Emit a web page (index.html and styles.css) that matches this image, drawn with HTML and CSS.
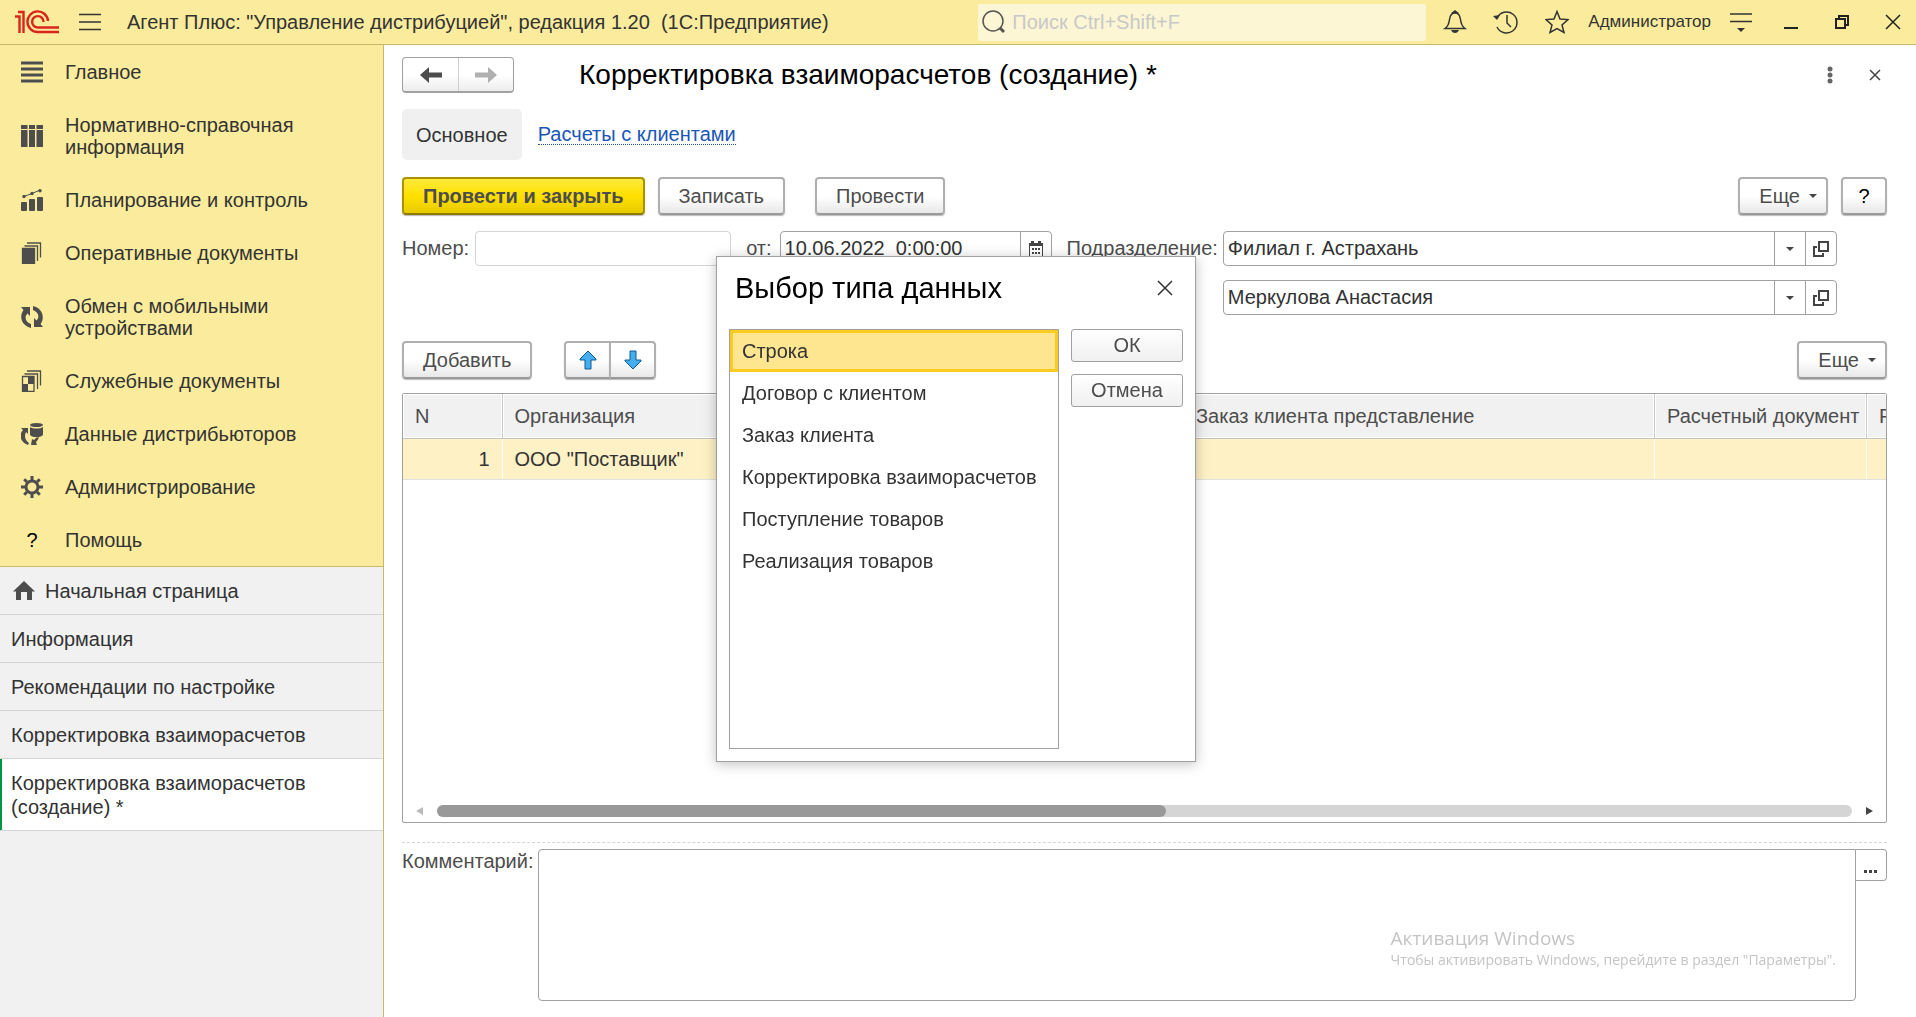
FILE: index.html
```html
<!DOCTYPE html>
<html lang="ru">
<head>
    <meta charset="UTF-8">
    <meta name="viewport" content="width=device-width, initial-scale=1.0">
    <title>Корректировка взаиморасчетов (создание) *</title>
    <link rel="stylesheet" href="styles.css">
</head>
<body>

<!-- Top bar -->
<header class="topbar">
    <svg class="logo" width="44" height="24" viewBox="0 0 44 24" fill="none" stroke="#d9261c" stroke-width="2.400">
        <path d="M0 6.500h4.500V23M3 2h5.500V23"/>
        <path d="M33 11A10.300 10.300 0 1 0 22.800 22H44"/>
        <path d="M28.500 12A5.700 5.700 0 1 0 22.800 17.500H44"/>
    </svg>
    <button class="icon-btn burger" aria-label="Меню">
        <svg width="22" height="18" viewBox="0 0 22 18" stroke="#333" stroke-width="1.500"><path d="M0 1.500h22M0 9h22M0 16.500h22"/></svg>
    </button>
    <span class="app-title">Агент Плюс: "Управление дистрибуцией", редакция 1.20&nbsp; (1С:Предприятие)</span>

    <label class="search">
        <svg width="24" height="24" viewBox="0 0 24 24" fill="none" stroke="#555"><circle cx="11" cy="11" r="10" stroke-width="1.500"/><path d="M18 18l4 4" stroke-width="3"/></svg>
        <input type="text" placeholder="Поиск Ctrl+Shift+F" aria-label="Поиск">
    </label>

    <nav class="top-tools">
        <button class="icon-btn" aria-label="Уведомления">
            <svg width="24" height="24" viewBox="0 0 24 24" fill="none" stroke="#333" stroke-width="1.500"><path d="M2 18.500c3-2 4-5 4.500-9C7 5.500 8.500 3 12 3s5 2.500 5.500 6.500c.5 4 1.500 7 4.500 9z"/><path d="M10 2.500h4L12 1z" fill="#333"/><path d="M8 20h8c-1 2-2 3-4 3s-3-1-4-3z" fill="#333" stroke="none"/></svg>
        </button>
        <button class="icon-btn" aria-label="История">
            <svg width="26" height="26" viewBox="0 0 26 26" fill="none" stroke="#333" stroke-width="1.500"><path d="M4 9A10.500 10.500 0 1 1 4 18"/><path d="M14 6v8l4 4"/><path d="M0 7l7-1-3 5z" fill="#333" stroke="none"/></svg>
        </button>
        <button class="icon-btn" aria-label="Избранное">
            <svg width="24" height="24" viewBox="0 0 24 24" fill="none" stroke="#333" stroke-width="1.500"><path d="M12 1.500l3 7.500 8 .6-6 5.400 2 7.500-7-4-7 4 2-7.500-6-5.400 8-.6z"/></svg>
        </button>
        <span class="user">Администратор</span>
        <button class="icon-btn" aria-label="Настройки">
            <svg width="22" height="22" viewBox="0 0 22 22" stroke="#333" stroke-width="1.500"><path d="M0 3h22M0 10.500h22"/><path d="M7 17h8l-4 4z" fill="#333" stroke="none"/></svg>
        </button>
    </nav>
    <div class="window-tools">
        <button class="icon-btn" aria-label="Свернуть">
            <svg width="16" height="16" viewBox="0 0 16 16"><path d="M1 13h14v2H1z" fill="#222"/></svg>
        </button>
        <button class="icon-btn" aria-label="Восстановить">
            <svg width="16" height="16" viewBox="0 0 16 16" fill="none" stroke="#222" stroke-width="2"><path d="M2 5h9v9H2zM5 5V2h9v9h-3"/></svg>
        </button>
        <button class="icon-btn" aria-label="Закрыть">
            <svg width="16" height="16" viewBox="0 0 16 16" stroke="#222" stroke-width="1.500"><path d="M1 1l14 14M15 1L1 15"/></svg>
        </button>
    </div>
</header>

<div class="layout">

    <!-- Left panel -->
    <aside class="sidebar">
        <nav class="sections">
            <a href="#">
                <svg viewBox="0 0 22 22" stroke="#4d4d4d" stroke-width="3"><path d="M0 2h22M0 8h22M0 14h22M0 20h22"/></svg>
                Главное
            </a>
            <a href="#">
                <svg viewBox="0 0 22 22" fill="#4d4d4d"><path d="M0 0h6.500v4H0zM8 0h6v4H8zM15.500 0H22v4h-6.500zM0 5h6.500v17H0zM8 5h6v17H8zM15.500 5H22v17h-6.500z"/></svg>
                Нормативно-справочная информация
            </a>
            <a href="#">
                <svg viewBox="0 0 22 22" fill="#4d4d4d"><rect y="13" width="6" height="9" rx="1"/><rect x="8" y="10" width="6" height="12" rx="1"/><rect x="16" y="8" width="6" height="14" rx="1"/><path d="M3 7.500l8-3L19 1" fill="none" stroke="#4d4d4d"/><circle cx="3" cy="7.500" r="1.700"/><circle cx="11" cy="4.500" r="1.700"/><circle cx="19" cy="1.700" r="1.700"/></svg>
                Планирование и контроль
            </a>
            <a href="#">
                <svg viewBox="0 0 22 22" fill="none" stroke="#4d4d4d" stroke-width="1.300"><path d="M1.500 6.500h12v15h-12z" fill="#4d4d4d"/><path d="M3.500 4h13v15M6 1h13.500v14.500"/></svg>
                Оперативные документы
            </a>
            <a href="#">
                <svg viewBox="0 0 22 22" fill="#4d4d4d"><path d="M0 1h9v9L6.500 7.500C3 11 4.500 16 10 18v4C1 20 -2.500 11 2.500 4z"/><path d="M22 21h-9v-9l2.500 2.500C19 11 17.500 6 12 4V0c9 2 12.500 11 7.500 18z"/></svg>
                Обмен с мобильными устройствами
            </a>
            <a href="#">
                <svg viewBox="0 0 22 22" fill="none" stroke="#4d4d4d" stroke-width="1.300"><path d="M1.500 6.500h11.500v15H1.500z"/><path d="M7 7h6v7H7zM2 14h5v7H2z" fill="#4d4d4d" stroke="none"/><path d="M3.500 4h13v15M6 1h13.500v14.500"/></svg>
                Служебные документы
            </a>
            <a href="#">
                <svg viewBox="0 0 22 22" fill="#4d4d4d"><ellipse cx="15.500" cy="2" rx="6.500" ry="2"/><path d="M9 4c3 2 10 2 13 0v8c-3 3-10 3-13 0z"/><path d="M0 5h7v6L5 9c-2 4-1 8 3 11l-1 2C-2 18-2 11 2 7zM18 14c-1 3-2 4-3 5l1 3h-6l1-6 2 1 2-2z"/></svg>
                Данные дистрибьюторов
            </a>
            <a href="#">
                <svg viewBox="0 0 22 22" fill="none" stroke="#4d4d4d" stroke-width="3"><circle cx="11" cy="11" r="6"/><path d="M11 0v4M11 18v4M0 11h4M18 11h4M3.200 3.200L6 6M16 16l2.800 2.800M18.800 3.200L16 6M6 16l-2.800 2.800"/></svg>
                Администрирование
            </a>
            <a href="#">
                <span class="question">?</span>
                Помощь
            </a>
        </nav>
        <nav class="open-windows">
            <a href="#">
                <svg width="22" height="20" viewBox="0 0 22 20" fill="#4d4d4d"><path d="M11 0l11 10.500h-3V19h-5v-8H8v8H3v-8.500H0z"/></svg>
                Начальная страница
            </a>
            <a href="#">Информация</a>
            <a href="#">Рекомендации по настройке</a>
            <a href="#">Корректировка взаиморасчетов</a>
            <a href="#" class="active">Корректировка взаиморасчетов (создание) *</a>
        </nav>
    </aside>

    <!-- Document form -->
    <main class="form">
        <div class="form-head">
            <div class="history">
                <button aria-label="Назад">
                    <svg width="22" height="16" viewBox="0 0 22 16" fill="#4d4d4d"><path d="M0 8l9-8v5.500h13v5H9V16z"/></svg>
                </button>
                <button aria-label="Вперед">
                    <svg width="22" height="16" viewBox="0 0 22 16" fill="#b0b0b0"><path d="M22 8l-9-8v5.500H0v5h13V16z"/></svg>
                </button>
            </div>
            <h1>Корректировка взаиморасчетов (создание) *</h1>
            <div class="head-tools">
                <button class="icon-btn" aria-label="Действия">
                    <svg width="12" height="18" viewBox="0 0 12 18" fill="#666"><circle cx="6" cy="3" r="2.500"/><circle cx="6" cy="9" r="2.500"/><circle cx="6" cy="15" r="2.500"/></svg>
                </button>
                <button class="icon-btn" aria-label="Закрыть форму">
                    <svg width="12" height="12" viewBox="0 0 12 12" stroke="#444" stroke-width="1.500"><path d="M1 1l10 10M11 1L1 11"/></svg>
                </button>
            </div>
        </div>

        <nav class="tabs">
            <span class="tab">Основное</span>
            <a href="#">Расчеты с клиентами</a>
        </nav>

        <div class="commands">
            <button class="btn primary">Провести и закрыть</button>
            <button class="btn">Записать</button>
            <button class="btn separate">Провести</button>
            <button class="btn more">Еще <i class="caret"></i></button>
            <button class="btn help">?</button>
        </div>

        <div class="fields">
            <label for="number">Номер:</label>
            <input class="box number" type="text" id="number">
            <label for="date" class="from">от:</label>
            <div class="box date">
                <input type="text" id="date" value="10.06.2022  0:00:00">
                <button aria-label="Календарь">
                    <svg width="14" height="16" viewBox="0 0 14 16"><path d="M0 2h14v14H0z" fill="#444"/><path d="M2 0h3v3H2zM9 0h3v3H9z" fill="#444"/><path d="M1 5h12v10H1z" fill="#fff"/><path d="M3 7h2v2H3zM6 7h2v2H6zM9 7h2v2H9zM3 11h2v2H3zM6 11h2v2H6zM9 11h2v2H9z" fill="#444"/></svg>
                </button>
            </div>
            <label for="department" class="department">Подразделение:</label>
            <div class="pickers">
                <div class="box">
                    <input type="text" id="department" value="Филиал г. Астрахань">
                    <button aria-label="Выбрать"><i class="caret"></i></button>
                    <button aria-label="Открыть">
                        <svg width="16" height="16" viewBox="0 0 16 16" fill="none" stroke="#444" stroke-width="2"><path d="M6 1h9v9H6zM4 6H1v9h9v-3"/></svg>
                    </button>
                </div>
                <div class="box">
                    <input type="text" value="Меркулова Анастасия" aria-label="Ответственный">
                    <button aria-label="Выбрать"><i class="caret"></i></button>
                    <button aria-label="Открыть">
                        <svg width="16" height="16" viewBox="0 0 16 16" fill="none" stroke="#444" stroke-width="2"><path d="M6 1h9v9H6zM4 6H1v9h9v-3"/></svg>
                    </button>
                </div>
            </div>
        </div>

        <div class="commands table-commands">
            <button class="btn">Добавить</button>
            <div class="move">
                <button class="btn" aria-label="Вверх">
                    <svg width="18" height="20" viewBox="0 0 18 20" fill="#45aeef" stroke="#0f5c94"><path d="M9 1l8 8v1h-5v9H6v-9H1V9z"/></svg>
                </button>
                <button class="btn" aria-label="Вниз">
                    <svg width="18" height="20" viewBox="0 0 18 20" fill="#45aeef" stroke="#0f5c94"><path d="M9 19l8-8v-1h-5V1H6v9H1v1z"/></svg>
                </button>
            </div>
            <button class="btn more">Еще <i class="caret"></i></button>
        </div>

        <div class="grid">
            <div class="grid-body">
                <table>
                    <colgroup>
                        <col class="col-n">
                        <col>
                        <col class="col-order">
                        <col class="col-doc">
                        <col class="col-rest">
                    </colgroup>
                    <thead>
                        <tr>
                            <th>N</th>
                            <th>Организация</th>
                            <th>Заказ клиента представление</th>
                            <th>Расчетный документ</th>
                            <th>Р</th>
                        </tr>
                    </thead>
                    <tbody>
                        <tr>
                            <td class="num">1</td>
                            <td>ООО "Поставщик"</td>
                            <td></td>
                            <td></td>
                            <td></td>
                        </tr>
                    </tbody>
                </table>
            </div>
            <div class="scroll">
                <svg width="7" height="8" viewBox="0 0 7 8" fill="#bbb"><path d="M7 0v8L0 4z"/></svg>
                <div class="track"><div class="thumb"></div></div>
                <svg width="7" height="8" viewBox="0 0 7 8" fill="#444"><path d="M0 0v8l7-4z"/></svg>
            </div>
        </div>

        <div class="comment">
            <label for="comment">Комментарий:</label>
            <textarea id="comment"></textarea>
            <button aria-label="Открыть комментарий">
                <svg width="14" height="3" viewBox="0 0 14 3" fill="#444"><path d="M0 0h3v3H0zM5 0h3v3H5zM10 0h3v3h-3z"/></svg>
            </button>
        </div>
    </main>
</div>

<div class="activation">
    <p class="activation-title">Активация Windows</p>
    <p>Чтобы активировать Windows, перейдите в раздел "Параметры".</p>
</div>

<!-- Type picker -->
<div class="overlay">
    <div class="dialog" role="dialog" aria-labelledby="dialog-title">
        <div class="dialog-head">
            <h2 id="dialog-title">Выбор типа данных</h2>
            <button class="icon-btn" aria-label="Закрыть окно">
                <svg width="16" height="16" viewBox="0 0 16 16" stroke="#333" stroke-width="1.500"><path d="M1 1l14 14M15 1L1 15"/></svg>
            </button>
        </div>
        <div class="dialog-body">
            <ul role="listbox" aria-label="Тип данных">
                <li role="option" aria-selected="true" class="selected">Строка</li>
                <li role="option">Договор с клиентом</li>
                <li role="option">Заказ клиента</li>
                <li role="option">Корректировка взаиморасчетов</li>
                <li role="option">Поступление товаров</li>
                <li role="option">Реализация товаров</li>
            </ul>
            <div class="dialog-buttons">
                <button>ОК</button>
                <button>Отмена</button>
            </div>
        </div>
    </div>
</div>

</body>
</html>
```
FILE: styles.css
```css
* {
    box-sizing: border-box;
}

body {
    margin: 0;
    min-height: 100vh;
    display: flex;
    flex-direction: column;
    font-family: "Liberation Sans", Arial, sans-serif;
    font-size: 20px;
    line-height: 24px;
    color: #333;
    background-color: #fff;
}

button, input, textarea {
    font: inherit;
    color: inherit;
}

button {
    padding: 0;
    cursor: pointer;
}

svg {
    display: block;
    flex-shrink: 0;
}

.icon-btn {
    display: flex;
    align-items: center;
    justify-content: center;
    border: none;
    background: none;
}

/* Top bar */
.topbar {
    display: flex;
    align-items: center;
    height: 45px;
    padding: 0 15px;
    background-color: #fbec9d;
    border-bottom: 1px solid #c8b86a;
}

.burger {
    margin: 0 26px 0 20px;
}

.app-title {
    white-space: nowrap;
}

.search {
    display: flex;
    align-items: center;
    gap: 6px;
    width: 448px;
    height: 37px;
    margin-left: auto;
    padding: 0 4px;
    background-color: #fdf6d5;
    border-radius: 3px;
}

.search input {
    flex: 1;
    min-width: 0;
    padding: 0;
    border: none;
    background: none;
    outline: none;
}

.search input::placeholder {
    color: #c8c8c8;
}

.top-tools {
    display: flex;
    align-items: center;
    gap: 26px;
    margin-left: 17px;
}

.user {
    margin: 0 -7px;
    font-size: 17px;
}

.window-tools {
    display: flex;
    gap: 35px;
    margin-left: 31px;
}

/* Left panel */
.layout {
    flex: 1;
    display: flex;
}

.sidebar {
    width: 384px;
    flex-shrink: 0;
    background-color: #f1f1f1;
    border-right: 1px solid #c8b86a;
}

.sidebar a {
    color: #333;
    text-decoration: none;
}

.sections {
    background-color: #fbec9d;
    border-bottom: 1px solid #c8b86a;
}

.sections a {
    display: flex;
    align-items: center;
    gap: 22px;
    padding: 16px 60px 15px 21px;
    line-height: 22px;
}

.sections svg,
.question {
    width: 22px;
    height: 22px;
    flex-shrink: 0;
}

.question {
    text-align: center;
    color: #000;
}

.open-windows a {
    display: flex;
    align-items: center;
    gap: 10px;
    padding: 12px 60px 11px 11px;
    border-bottom: 1px solid #d5d5d5;
}

.open-windows svg {
    margin-left: 2px;
}

.open-windows .active {
    background-color: #fff;
    box-shadow: inset 2px 0 #009646;
}

/* Document form */
.form {
    flex: 1;
    min-width: 0;
    display: flex;
    flex-direction: column;
    padding: 12px 29px 16px 18px;
}

.form-head {
    display: flex;
    align-items: center;
}

.history {
    display: flex;
    border: 1px solid #a0a0a0;
    border-bottom-width: 2px;
    border-radius: 4px;
    background: linear-gradient(#fff 50%, #ededed);
}

.history button {
    display: flex;
    align-items: center;
    justify-content: center;
    width: 55px;
    height: 33px;
    border: none;
    background: none;
}

.history button + button {
    border-left: 1px solid #d0d0d0;
}

h1, h2 {
    margin: 0;
    font-weight: normal;
    color: #000;
}

h1 {
    margin-left: 65px;
    font-size: 28px;
    line-height: 32px;
}

.head-tools {
    display: flex;
    align-items: center;
    gap: 33px;
    margin-left: auto;
    padding-right: 6px;
}

.tabs {
    display: flex;
    align-items: center;
    gap: 16px;
    margin-top: 16px;
}

.tab {
    padding: 14px 14px 13px;
    background-color: #f0f0f0;
    border-radius: 5px;
}

.tabs a {
    color: #1a56b8;
    line-height: 20px;
    text-decoration: none;
    border-bottom: 1px dotted #1a56b8;
}

/* Buttons */
.commands {
    display: flex;
    margin-top: 17px;
}

.btn {
    display: flex;
    align-items: center;
    justify-content: center;
    height: 38px;
    padding: 0 19px;
    color: #4d4d4d;
    border: 2px solid #b0b0b0;
    border-bottom-color: #999;
    border-radius: 4px;
    background: linear-gradient(#fff 50%, #e8e8e8);
    box-shadow: 0 1px 1px #bbb;
}

.btn + .btn {
    margin-left: 13px;
}

.btn.primary {
    font-weight: bold;
    border-color: #ab9200;
    border-bottom-color: #8f7a00;
    background: linear-gradient(#ffea3c, #ffe000 50%, #e8cb00);
}

.btn.separate {
    margin-left: 30px;
}

.btn.more {
    margin-left: auto;
    padding-right: 9px;
    gap: 9px;
}

.btn.help {
    width: 46px;
    padding: 0;
    color: #000;
}

.caret {
    border: 4px solid transparent;
    border-top-color: #444;
    border-bottom: none;
}

/* Fields */
.fields {
    display: flex;
    align-items: flex-start;
    margin-top: 16px;
    color: #4d4d4d;
    line-height: 35px;
}

.box {
    height: 35px;
    border: 1px solid #a0a0a0;
    border-radius: 4px;
    color: #333;
    background-color: #fff;
}

div.box {
    display: flex;
}

.box input {
    flex: 1;
    min-width: 0;
    padding: 0 4px;
    border: none;
    background: none;
    outline: none;
}

.box button {
    display: flex;
    align-items: center;
    justify-content: center;
    width: 31px;
    border: none;
    border-left: 1px solid #a0a0a0;
    background: none;
}

.number {
    width: 256px;
    margin-left: 6px;
    border-color: #d5d5d5;
}

.from {
    margin: 0 8px 0 15px;
}

.date {
    width: 272px;
}

.department {
    margin: 0 5px 0 15px;
}

.pickers {
    flex: 1;
    display: flex;
    flex-direction: column;
    gap: 14px;
    margin-right: 50px;
}

.table-commands {
    margin-top: 26px;
}

.move {
    display: flex;
    margin-left: 32px;
}

.move .btn {
    width: 47px;
    padding: 0;
}

.move .btn:first-child {
    border-radius: 4px 0 0 4px;
}

.move .btn + .btn {
    margin-left: -2px;
    border-radius: 0 4px 4px 0;
}

/* Table */
.grid {
    flex: 1;
    display: flex;
    flex-direction: column;
    margin-top: 14px;
    border: 1px solid #a0a0a0;
    border-radius: 2px;
}

.grid-body {
    flex: 1;
    overflow: hidden;
}

table {
    width: calc(100% + 200px);
    table-layout: fixed;
    border-collapse: collapse;
}

.col-n {
    width: 99px;
}

.col-order {
    width: 471px;
}

.col-doc {
    width: 212px;
}

.col-rest {
    width: 219px;
}

th, td {
    padding: 0 6px 0 12px;
    text-align: left;
    font-weight: normal;
    white-space: nowrap;
}

th {
    height: 44px;
    color: #4d4d4d;
    background-color: #f1f1f1;
    border-right: 1px solid #ccc;
    border-bottom: 1px solid #c4c4c4;
    box-shadow: inset 0 0 0 1px #fff;
}

td {
    height: 41px;
    background-color: #fdf1c5;
    border-right: 1px solid #fff;
    border-bottom: 1px solid #e0e0e0;
}

td.num {
    padding-right: 12px;
    text-align: right;
}

.scroll {
    display: flex;
    align-items: center;
    gap: 14px;
    padding: 5px 13px;
}

.track {
    flex: 1;
    height: 12px;
    border-radius: 6px;
    background-color: #d5d5d5;
}

.thumb {
    width: 51.5%;
    height: 12px;
    border-radius: 6px;
    background-color: #999;
}

/* Comment */
.comment {
    display: flex;
    align-items: flex-start;
    margin-top: 19px;
    padding-top: 6px;
    border-top: 1px dashed #d5d5d5;
    color: #4d4d4d;
}

.comment textarea {
    flex: 1;
    height: 152px;
    margin-left: 4px;
    border: 1px solid #a0a0a0;
    border-radius: 4px 0 4px 4px;
    resize: none;
    outline: none;
}

.comment button {
    display: flex;
    align-items: center;
    justify-content: center;
    width: 31px;
    height: 32px;
    padding-top: 12px;
    border: 1px solid #a0a0a0;
    border-left: none;
    border-radius: 0 4px 4px 0;
    background: none;
}

.activation {
    position: fixed;
    right: 80px;
    bottom: 46px;
    font-family: "Open Sans", "Noto Sans", sans-serif;
    font-size: 14px;
    line-height: 22px;
    color: #c4c4c4;
    pointer-events: none;
}

.activation p {
    margin: 0;
}

.activation .activation-title {
    font-size: 19px;
}

/* Type picker */
.overlay {
    position: fixed;
    inset: 0 4px 0 0;
    display: flex;
    align-items: center;
    justify-content: center;
}

.dialog {
    display: flex;
    flex-direction: column;
    width: 480px;
    height: 506px;
    padding: 14px 12px 12px;
    background-color: #fff;
    border: 1px solid #a0a0a0;
    box-shadow: 0 2px 12px rgba(0, 0, 0, 0.25);
}

.dialog-head {
    display: flex;
    align-items: center;
    justify-content: space-between;
    padding: 0 10px 0 6px;
}

h2 {
    font-size: 29px;
    line-height: 34px;
}

.dialog-body {
    flex: 1;
    display: flex;
    gap: 12px;
    margin-top: 24px;
}

.dialog ul {
    flex: 1;
    margin: 0;
    padding: 0;
    list-style: none;
    border: 1px solid #a0a0a0;
}

.dialog li {
    padding: 9px 12px;
}

.dialog li.selected {
    padding: 6px 9px;
    background-color: #fee58f;
    border: 3px solid #fbcb1f;
}

.dialog-buttons {
    display: flex;
    flex-direction: column;
    gap: 12px;
    width: 112px;
}

.dialog-buttons button {
    height: 33px;
    color: #4d4d4d;
    border: 1px solid #a0a0a0;
    border-radius: 3px;
    background: linear-gradient(#fff, #f0f0f0);
}
```
